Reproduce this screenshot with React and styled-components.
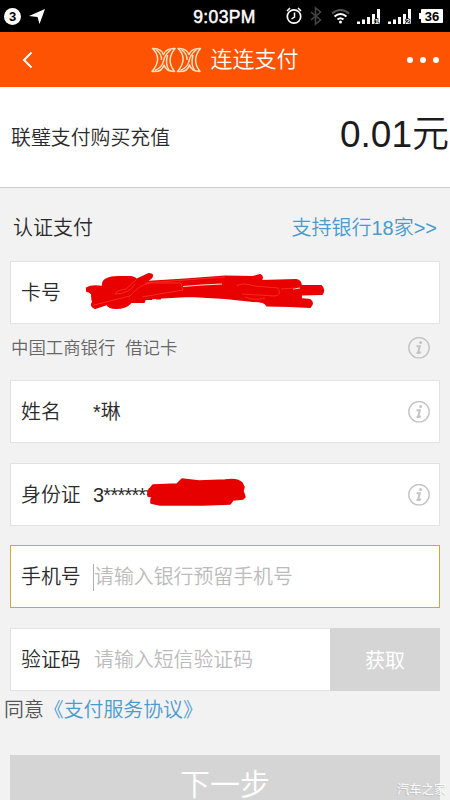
import styled, { createGlobalStyle } from "styled-components";

const GlobalStyle = createGlobalStyle`
  * {
    box-sizing: border-box;
  }
  body {
    margin: 0;
    background: #f2f2f2;
    font-family: "Liberation Sans", "Noto Sans CJK SC", sans-serif;
    font-weight: 350;
  }
`;

const Screen = styled.div`
  width: 450px;
  height: 800px;
  overflow: hidden;
  display: flex;
  flex-direction: column;
  background: #f2f2f2;
  color: #2b2b2b;
  white-space: nowrap;
`;

const StatusBar = styled.div`
  flex: none;
  height: 32px;
  padding: 0 7px 0 4px;
  display: grid;
  grid-template-columns: 1fr auto 1fr;
  align-items: center;
  background: #000;
  color: #fff;
`;

const StatusLeft = styled.div`
  display: flex;
  align-items: center;
  gap: 8px;
`;

const Clock = styled.div`
  font-size: 17.5px;
  line-height: 20px;
  letter-spacing: 0.4px;
  -webkit-text-stroke: 0.5px #fff;
  padding: 1px 0 0 2px;
`;

const StatusRight = styled.div`
  display: flex;
  align-items: center;
  justify-content: flex-end;
`;

const CountBadge = styled.div`
  width: 17px;
  height: 17px;
  border-radius: 50%;
  background: #fff;
  color: #000;
  font-size: 13px;
  font-weight: bold;
  line-height: 17px;
  text-align: center;
`;

const Battery = styled.div`
  position: relative;
  margin-left: 3px;
  width: 22px;
  height: 14px;
  border-radius: 1px;
  background: #fff;
  color: #000;
  font-size: 13px;
  font-weight: bold;
  line-height: 15px;
  text-align: center;

  &::before {
    content: "";
    position: absolute;
    left: -2px;
    top: 4px;
    width: 2px;
    height: 6px;
    background: #fff;
  }
`;

const Header = styled.header`
  flex: none;
  height: 55px;
  padding: 0 11px 0 20px;
  display: grid;
  grid-template-columns: 1fr auto 1fr;
  align-items: center;
  background: #fe5302;
  color: #fff;
`;

const Brand = styled.div`
  display: flex;
  align-items: center;
  gap: 7px;
  margin-right: 9px;
  font-size: 22px;
  line-height: 32px;
`;

const More = styled.div`
  justify-self: end;
  display: flex;
  gap: 7px;
`;

const Dot = styled.i`
  width: 6px;
  height: 6px;
  border-radius: 50%;
  background: #fff;
`;

const Order = styled.section`
  flex: none;
  height: 101px;
  padding: 0 1px 0 11px;
  display: flex;
  justify-content: space-between;
  background: #fff;
  border-bottom: 1px solid #cfcfcf;
  font-size: 19.9px;
  line-height: 103px;
`;

const Price = styled.div`
  font-size: 37px;
  line-height: 95px;
  color: #1c1c1c;
`;

const SectionHead = styled.div`
  flex: none;
  height: 73px;
  padding: 0 13px;
  display: flex;
  justify-content: space-between;
  line-height: 81px;
  font-size: 20px;
`;

const Link = styled.span`
  color: #4b9ace;
`;

const Field = styled.div`
  flex: none;
  height: 63px;
  margin: 0 10px ${(p) => p.$gap ?? 20}px;
  padding: 0 9px 0 10px;
  display: flex;
  align-items: center;
  background: #fff;
  border: 1px solid ${(p) => (p.$active ? "#cda34c" : "#e2e2e2")};
  font-size: 19.9px;
  line-height: 30px;
`;

const Label = styled.div`
  width: 72px;
  padding-top: 1px;
`;

const Value = styled.div`
  flex: 1;
  display: flex;
  align-items: center;
  padding-top: 1px;
`;

const Masked = styled.span`
  letter-spacing: -0.7px;
`;

const Placeholder = styled.span`
  color: #bbb;
  padding-left: 1px;
`;

const Caret = styled.i`
  width: 1px;
  height: 27px;
  background: #b0b0b0;
  margin-right: -1px;
`;

const BankRow = styled.div`
  flex: none;
  height: 56px;
  padding: 0 20px 8px 11px;
  display: flex;
  align-items: center;
  justify-content: space-between;
  font-size: 17.4px;
  line-height: 26px;
  color: #666;
  word-spacing: 5px;
`;

const BankName = styled.span`
  margin-bottom: 1px;
`;

const CodeField = styled(Field)`
  padding-right: 0;
  border-right: 0;
`;

const FetchButton = styled.button`
  align-self: stretch;
  margin: -1px 0;
  width: 110px;
  padding: 0;
  border: 0;
  background: #d5d5d5;
  color: #fff;
  font: 400 20px "Liberation Sans", "Noto Sans CJK SC", sans-serif;
`;

const Agreement = styled.div`
  flex: none;
  height: 64px;
  padding-left: 4px;
  font-size: 19.9px;
  line-height: 39px;
  color: #555;
`;

const Next = styled.button`
  flex: none;
  height: 60px;
  margin: 0 10px;
  padding: 0 0 1px;
  border: 0;
  background: #d5d5d5;
  color: #fff;
  font: 350 30px/30px "Liberation Sans", "Noto Sans CJK SC", sans-serif;
`;

const Watermark = styled.div`
  position: absolute;
  left: 397px;
  top: 781px;
  font-size: 12.3px;
  line-height: 18px;
  color: #fff;
  text-shadow: -1px 1px 1px #bbb;
  white-space: nowrap;
`;

const Scribble = styled.svg`
  position: absolute;
  left: ${(p) => p.$x}px;
  top: ${(p) => p.$y}px;
`;

function InfoIcon() {
  return (
    <svg width="22" height="22" viewBox="0 0 22 22" fill="none" stroke="#c4c4c4">
      <circle cx="11" cy="10.7" r="10.2" strokeWidth="1.4" />
      <circle cx="12.6" cy="5.4" r="1.5" fill="#c4c4c4" stroke="none" />
      <path d="M8.500 9.300h3.300l-1.600 6q-.1 1.400 2.700-.2M8.500 16h2" strokeWidth="2" />
    </svg>
  );
}

function LogoMark() {
  return (
    <svg width="52" height="26" viewBox="0 0 52 26" fill="none" stroke="#ffe0bd" strokeWidth="1.5" strokeLinejoin="round">
      {[0, 25.5].map((x) => (
        <g key={x} transform={`translate(${x} 0)`}>
          <path d="M1.500 1.500Q12 11.500 1 24.500Q11 25.500 13 18Q15 24.500 23.500 24.500Q14.500 13 24 1.500Q15 1 12.500 7.500Q10 1 1.500 1.500z" />
          <path d="M5 2.500Q11 7 10.500 13M20 2.500Q13.500 8 12.500 14T4 23.500M16.500 8Q14 18 18 23" />
        </g>
      ))}
    </svg>
  );
}

function StatusIcons() {
  return (
    <svg width="132" height="20" viewBox="0 0 132 20" fill="none" stroke="#fff">
      <circle cx="8" cy="10.500" r="6.700" strokeWidth="1.7" />
      <path d="M8.500 6.500v4.500L5.500 13M1 5l3-3M12 2l3 3" strokeWidth="1.5" />
      <path d="M25 6l9.500 8-5 4V2l5 4L25 14" stroke="#444" strokeWidth="1.6" />
      <path d="M46 7.500q8.500-7 17 0" stroke="#555" strokeWidth="2" />
      <path d="M48.500 10.500q6-5 12 0M51.500 13.500q3-2.500 6 0" strokeWidth="2" />
      <circle cx="54.500" cy="16" r="1.5" fill="#fff" stroke="none" />
      {[71, 102].map((x, n) => (
        <g key={x} fill="#fff" stroke="none">
          <rect x={x} y="15.500" width="3" height="2.500" />
          <rect x={x + 5} y="13.500" width="3" height="4.500" />
          <rect x={x + 10} y="11" width="3" height="7" />
          <rect x={x + 15} y="8" width="3" height="10" />
          <rect x={x + 20} y="3" width="3" height="15" />
          <text x={x + 17.500} y="18" fontSize="8" fontWeight="bold" stroke="#000" strokeWidth="1.500" paintOrder="stroke">
            {n + 1}
          </text>
        </g>
      ))}
    </svg>
  );
}

function CardScribble() {
  return (
    <Scribble $x={84} $y={270} width="242" height="42" viewBox="84 270 242 42">
      <path d="M156 298.500h5M144 299h8" stroke="#444" strokeWidth="2" />
      <path
        d="M87 288Q92 285 103 287Q102 281 107 279Q111 277 118 277L131 277Q136 278 136 280L149 274Q154 274 151 278L145 282L185 279.500L225 276.500L253 277L260 275Q264 277 260 281L296 280Q301 281 301 286L321 286Q325 289 322 294L301 294.500L301 299L310 300Q314 303 310 307L290 306L267 305.500Q265 301 253 301L225 298L190 296L162 297.500L145 299L144 302L131 302Q126 308 116 308Q109 308 107 304L95 308Q90 306 93 302Q92 299 92 294Q90 291 87 291z"
        fill="#e90000"
        stroke="#e90000"
        strokeWidth="2"
        strokeLinejoin="round"
      />
      <path d="M183 286.500l19-1.500 20-1M293 289l7-1" stroke="#ffd9d4" strokeWidth="1.200" />
      <g fill="none" stroke="#f8352f" strokeWidth="0.800">
        <path d="M115 294Q117 290 126 289L136 280M115 294Q129 294 135 284M94 305L130 296Q139 285 150 283H181L183 290L142 297" />
        <path d="M145 283L225 277M237 286Q241 282 255 286L278 288Q282 295 275 296L242 294M245 297Q254 301 265 298M281 289l15-1" />
      </g>
    </Scribble>
  );
}

function IdScribble() {
  return (
    <Scribble $x={145} $y={476} width="104" height="32" viewBox="145 476 104 32">
      <path
        d="M148 491L153 485L177 484L182 479L199 481L225 480Q238 478 242 483L244 487L243 491L245 497L243 499L233 500L230 504L203 505H160L151 503L151 499L153 497L148 496z"
        fill="#e60000"
        stroke="#e60000"
        strokeWidth="1.500"
        strokeLinejoin="round"
      />
    </Scribble>
  );
}

export default function App() {
  return (
    <Screen>
      <GlobalStyle />
      <StatusBar>
        <StatusLeft>
          <CountBadge>3</CountBadge>
          <svg width="17" height="17" viewBox="0 0 17 17">
            <path d="M16 1L10.500 16 8.500 9 0 8z" fill="#fff" />
          </svg>
        </StatusLeft>
        <Clock>9:03PM</Clock>
        <StatusRight>
          <StatusIcons />
          <Battery>36</Battery>
        </StatusRight>
      </StatusBar>

      <Header>
        <svg width="14" height="18" viewBox="0 0 14 18">
          <path d="M11.500 1.500L4 9l7.500 7.500" fill="none" stroke="#fff" strokeWidth="2" />
        </svg>
        <Brand>
          <LogoMark />
          连连支付
        </Brand>
        <More>
          <Dot />
          <Dot />
          <Dot />
        </More>
      </Header>

      <Order>
        联璧支付购买充值
        <Price>0.01元</Price>
      </Order>

      <SectionHead>
        <span>认证支付</span>
        <Link>支持银行18家&gt;&gt;</Link>
      </SectionHead>

      <Field $gap={0}>
        <Label>卡号</Label>
      </Field>
      <BankRow>
        <BankName>中国工商银行 借记卡</BankName>
        <InfoIcon />
      </BankRow>
      <Field>
        <Label>姓名</Label>
        <Value>*琳</Value>
        <InfoIcon />
      </Field>
      <Field $gap={19}>
        <Label>身份证</Label>
        <Value>
          <Masked>3*******</Masked>
        </Value>
        <InfoIcon />
      </Field>
      <Field $active>
        <Label>手机号</Label>
        <Value>
          <Caret />
          <Placeholder>请输入银行预留手机号</Placeholder>
        </Value>
      </Field>
      <CodeField $gap={0}>
        <Label>验证码</Label>
        <Value>
          <Placeholder>请输入短信验证码</Placeholder>
        </Value>
        <FetchButton>获取</FetchButton>
      </CodeField>

      <Agreement>
        同意<Link>《支付服务协议》</Link>
      </Agreement>
      <Next>下一步</Next>

      <CardScribble />
      <IdScribble />
      <Watermark>汽车之家</Watermark>
    </Screen>
  );
}
